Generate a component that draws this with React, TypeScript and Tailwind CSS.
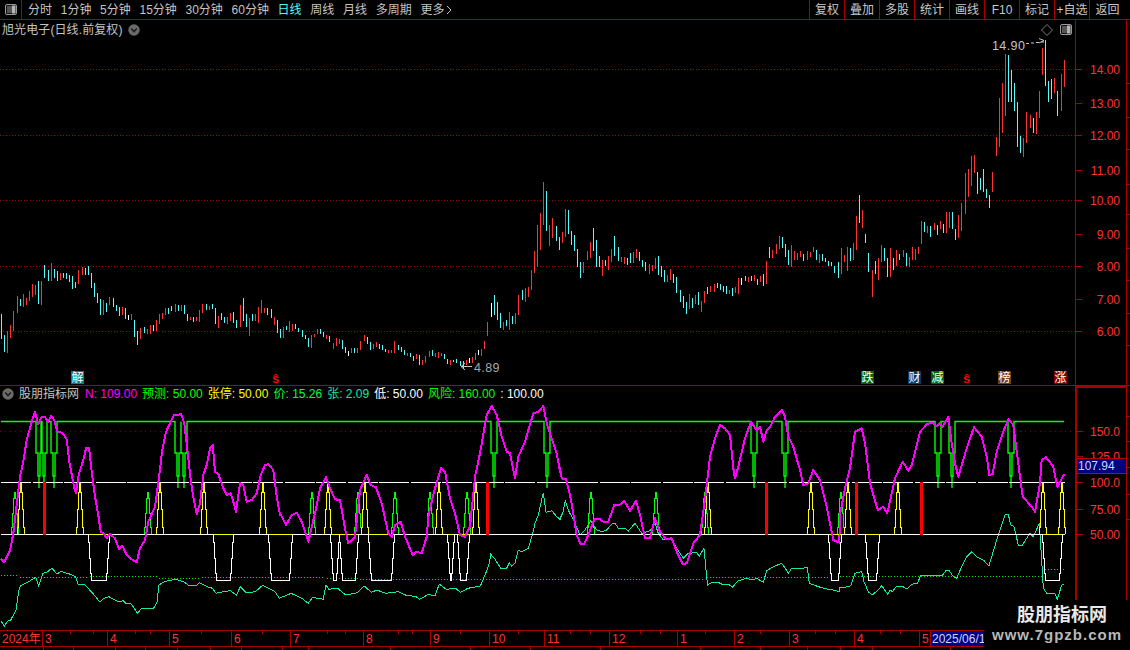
import React from "react";

const RED = "#ff3232";
const LINE = "#a80000";
const CYAN = "#54fcfc";

// candles read off the chart: x top bottom colour (crop coordinates)
const LEFT_CANDLES = "4 462 537 c,13 525 576 c,22 513 579 r,31 495 534 r,40 453 513 r,52 408 459 r,61 417 438 c,70 402 441 r,79 414 435 r,88 393 423 r,97 372 411 r,106 375 405 r,115 363 432 c,124 363 435 r,133 315 354 c,145 330 363 c,154 309 363 r,163 327 354 c,172 333 363 c,181 339 360 r,190 339 354 c,199 339 357 c,208 345 366 c,217 348 387 c,226 366 384 c,235 330 372 r,247 321 345 r,256 324 345 c,265 318 345 c,274 339 384 c,283 369 411 c,292 399 429 c,301 417 465 c,310 420 465 r,319 429 456 c,328 411 435 r,340 414 441 c,349 435 453 c,358 441 468 c,367 441 465 r,376 444 477 c,385 465 480 w,394 462 480 r,403 480 531 c,412 513 555 c,421 504 537 r,433 501 519 c,442 507 522 r,451 495 522 r,460 495 513 c,469 480 513 r,478 462 492 r,487 459 477 r,496 444 465 r,505 444 462 c,514 438 453 c,526 432 456 r,535 435 453 c,544 435 453 r,553 435 462 c,562 462 483 c,571 471 480 r,580 471 486 c,589 471 483 r,598 450 486 r,607 432 459 r,619 432 450 c,628 438 450 r,637 432 447 c,646 444 492 c,655 468 504 r,664 459 480 c,673 471 489 c,682 471 492 r,691 459 483 r,700 456 489 c,709 480 504 c,721 435 501 r,730 414 483 c,739 462 501 c,748 474 528 r,757 462 483 c,766 462 483 r,775 441 489 r,784 420 459 r,793 444 459 r,802 444 465 c,814 447 474 c,823 471 495 r,832 480 519 c,841 507 534 c,850 501 534 r,859 498 510 c,868 483 516 r,877 492 513 r,886 492 507 c,895 504 516 c,907 510 531 c,916 525 537 c,925 534 561 c,934 525 564 r,943 522 531 r,952 507 522 r,961 507 522 c,970 516 531 c,979 525 537 r,988 528 546 c,1000 549 567 r,1009 534 558 r,1018 537 552 r,1027 540 567 c,1036 561 579 c,1045 573 588 w,1054 564 579 r,1063 564 579 c,1072 564 579 r,1081 543 570 r,1093 525 543 r,1102 531 552 c,1111 546 570 c,1120 552 567 r,1129 546 561 r,1138 552 567 c,1147 555 570 c,1156 567 576 c,1165 570 579 r,1174 570 579 r,1183 543 579 r,1195 555 570 c,1204 561 576 c,1213 570 585 c,1222 579 588 r,1231 579 591 c,1240 588 603 c,1249 582 597 r,1258 585 615 c,1267 600 615 r,1276 588 609 r,1288 573 591 r,1297 570 588 c,1306 579 591 r,1315 576 594 r,1324 579 588 r,1333 582 597 c,1342 597 612 c,1351 600 615 r,1360 600 606 c,1369 597 609 c,1381 603 618 c,1390 603 627 c,1399 600 615 r,1408 594 609 w,1417 591 609 r,1426 579 600 r,1435 570 585 w,1444 567 588 r,1453 543 567 r,1462 486 528 r,1474 429 471 w,1483 405 465 c,1492 426 480 c,1501 459 504 c,1510 486 510 r,1519 480 498 c,1528 456 510 r,1537 468 492 c,1546 459 492 r,1555 405 465 r";

const RIGHT_CANDLES = "7 780 810 c,16 774 816 r,25 771 801 r,32 720 780 r,41 663 729 r,49 585 711 r,58 549 660 r,67 456 585 r,75 483 603 c,84 585 648 r,93 564 624 r,103 588 632 c,112 621 660 c,121 606 639 r,129 537 621 r,138 540 612 c,146 603 645 c,155 615 663 c,164 657 711 c,172 696 744 c,181 696 729 r,192 663 690 r,200 636 684 r,209 594 663 c,219 630 711 c,227 678 711 c,236 690 738 r,243 690 708 c,252 678 720 r,261 657 696 r,270 618 678 c,280 651 693 c,290 681 696 r,298 681 702 r,306 684 705 c,315 669 699 c,324 666 699 r,333 657 684 r,340 666 693 c,349 690 711 c,358 696 723 c,370 702 732 r,378 705 723 r,387 684 717 r,394 678 735 c,403 708 741 c,412 720 756 c,421 735 756 r,430 717 750 r,438 732 759 c,447 741 789 c,458 780 816 c,467 798 834 c,474 816 852 c,483 792 837 r,491 804 834 c,500 795 822 r,508 786 825 c,517 813 846 r,526 783 819 r,535 771 792 c,544 768 786 r,554 762 786 r,563 759 774 c,571 762 780 c,580 768 786 c,589 768 792 c,598 780 792 r,605 774 798 c,614 771 789 r,622 744 792 r,631 744 765 w,642 738 753 c,651 741 756 r,659 738 753 c,668 735 753 r,677 747 765 c,686 738 756 r,695 732 768 c,703 693 762 r,712 651 684 c,721 660 684 r,731 642 672 r,740 618 657 r,748 621 654 c,757 642 681 c,766 660 705 c,774 645 711 r,783 663 690 r,791 669 690 r,800 663 681 r,809 672 693 c,819 663 690 r,828 666 681 r,837 651 666 r,845 660 690 c,854 672 699 r,862 672 693 c,871 684 696 c,880 693 708 c,888 696 708 c,897 708 729 c,908 696 744 c,916 654 732 r,925 675 696 r,933 651 723 r,942 654 693 c,951 639 690 r,959 558 660 r,968 495 579 c,977 540 594 r,985 612 639 c,994 669 726 c,1005 720 801 r,1013 693 732 c,1022 684 750 r,1031 645 696 r,1039 654 693 c,1048 684 741 c,1056 654 741 r,1064 684 720 c,1073 660 708 r,1081 672 690 c,1093 660 681 r,1102 669 708 c,1110 681 711 r,1119 651 690 r,1127 657 690 r,1136 651 672 r,1145 573 642 r,1153 576 606 c,1162 588 609 r,1171 588 621 c,1181 579 600 r,1190 585 615 c,1199 573 597 r,1208 582 609 c,1216 546 609 r,1224 546 594 r,1233 546 597 c,1242 597 630 c,1250 555 624 r,1259 519 603 r,1270 429 552 r,1278 417 501 r,1287 378 468 r,1295 375 429 r,1304 426 492 c,1313 444 480 c,1321 417 486 c,1330 477 504 c,1338 495 534 c,1347 426 486 r,1358 321 378 r,1367 204 351 r,1375 159 309 r,1385 72 258 r,1393 75 216 c,1402 120 216 c,1410 159 243 c,1418 216 351 c,1427 318 369 c,1435 324 381 r,1444 246 339 r,1456 255 294 r,1464 264 309 c,1473 246 312 r,1481 183 264 r,1489 54 135 r,1498 30 168 c,1507 153 216 c,1515 147 207 c,1524 144 189 r,1532 183 258 c,1544 132 243 r,1552 90 171 r";

type Candle = { x: number; top: number; bottom: number; color: string };

const parseCandles = (src: string, ox: number, oy: number, sx: number): Candle[] =>
  src.split(",").map((row) => {
    const [x, t, b, c] = row.split(" ");
    return {
      x: Math.floor(ox + Number(x) / sx) + 0.5,
      top: Math.round(oy + Number(t) / 3),
      bottom: Math.round(oy + Number(b) / 3),
      color: c === "c" ? CYAN : c === "r" ? RED : "#ffffff",
    };
  });

const candles = [
  ...parseCandles(LEFT_CANDLES, 0, 160, 3),
  ...parseCandles(RIGHT_CANDLES, 520, 30, 2.851),
];

const toPoints = (src: string, ox: number, oy: number, sx: number) =>
  src
    .trim()
    .split(/\s+/)
    .map((p) => {
      const [x, y] = p.split(",").map(Number);
      return `${(ox + x / sx).toFixed(1)},${(oy + y / 3).toFixed(1)}`;
    })
    .join(" ");

const magenta = [
  toPoints("3,476 12,487 21,470 30,452 40,400 52,300 60,230 70,185 80,120 95,65 105,36 115,72 124,52 134,50 144,65 154,48 163,60 172,95 187,98 200,118 208,185 222,260 228,280 236,225 250,180 258,145 267,143 275,215 285,290 295,345 302,395 312,402 320,414 330,402 345,415 357,448 367,437 380,465 395,478 410,487 420,445 435,420 445,365 465,320 475,248 487,150 497,98 510,70 522,45 532,45 543,42 553,70 560,130 572,240 580,290 590,342 600,310 610,225 620,195 630,145 638,135 645,215 655,222 668,260 680,285 692,280 700,305 708,335 720,250 730,255 740,305 755,300 770,280 782,225 795,195 805,193 820,210 830,290 840,345", 0, 400, 3),
  toPoints("0,340 18,375 35,345 50,338 65,365 85,425 105,340 120,265 138,232 150,265 165,298 180,300 195,385 205,430 225,410 240,270 260,225 272,255 288,262 305,310 325,400 335,412 345,375 362,365 375,410 398,465 410,455 425,460 440,410 445,350 462,275 483,205 495,215 510,295 525,340 540,405 555,410 570,380 585,230 600,160 620,45 635,18 650,45 665,110 680,155 690,160 705,235 715,170 735,125 760,40 775,35 790,18 800,70 815,115 830,160 840,215", 280, 400, 3),
  toPoints("0,205 5,235 18,238 30,285 40,340 50,405 62,433 72,433 85,405 103,358 120,358 130,365 145,365 163,315 178,315 193,303 210,332 228,303 240,345 255,415 270,415 285,355 300,395 318,418 335,415 350,455 368,492 380,490 400,430 420,405 435,300 450,170 465,115 480,75 495,85 510,105 520,205 525,235 535,200 555,115 573,65 590,90 600,80 610,125 620,90 630,82 645,50 665,30 675,50 685,110 700,140 720,210 730,255 745,250 760,210 780,240 800,320 820,420 838,428", 560, 400, 3),
  toPoints("0,345 15,265 30,205 45,95 65,85 75,130 90,250 113,330 130,320 142,340 165,235 188,185 205,212 215,195 240,95 262,72 278,68 290,78 298,70 308,80 325,50 335,130 345,190 355,230 380,145 402,82 425,110 440,170 448,225 458,222 470,155 490,95 505,58 520,75 535,190 548,290 575,320 585,335 600,250 605,180 618,172 640,200 652,260 673,222", 840, 400, 3),
].join(" ");

const teal = [
  toPoints("3,183 12,198 22,183 30,180 45,150 52,95 57,78 80,65 100,52 108,78 120,40 132,36 145,25 160,42 170,34 195,42 212,50 218,72 235,72 260,100 280,127 290,115 305,110 330,125 345,122 352,130 368,132 385,160 395,147 430,145 440,125 445,75 460,65 490,58 515,65 530,78 552,75 558,68 580,80 595,85 605,100 625,95 645,92 662,105 673,80 690,98 715,95 735,76 770,95 782,115 815,100 845,115 863,130 875,112 905,118 913,75 920,88 945,85 968,105 1000,98 1020,78 1040,97 1055,90 1080,100 1115,95 1135,105 1165,110 1175,118 1200,103 1218,108 1230,72 1250,88 1275,85 1290,97 1310,85 1345,78 1360,40 1370,10", 0, 560, 2.8),
  toPoints("632,463 645,478 662,505 680,505 688,488 695,498 705,490 715,450 725,455 745,445 757,405 765,370 775,345 790,278 798,337 815,332 830,350 840,358", 280, 400, 3),
  toPoints("0,355 8,340 16,302 25,330 45,370 60,405 75,390 92,362 110,390 125,395 140,390 155,372 165,370 175,385 195,385 205,393 225,370 235,385 245,400 270,392 285,370 295,400 310,420 320,415 335,418 350,445 370,475 385,460 410,458 418,468 432,445 437,500 440,535 443,555 455,547 475,547 490,555 505,552 517,562 535,542 560,535 575,540 590,535 610,547 620,512 640,500 665,490 675,503 685,520 695,505 720,505 742,503 748,550 775,560 800,567 820,570 838,575", 560, 400, 3),
  toPoints("0,562 15,562 32,557 45,520 65,515 72,545 85,575 97,585 115,570 125,557 143,583 150,570 157,575 170,558 185,558 200,567 215,553 232,550 243,525 265,528 290,527 305,528 318,512 328,512 340,530 350,535 365,500 380,470 395,455 410,470 430,480 447,497 470,420 495,345 505,343 512,375 522,380 535,435 547,435 570,400 580,410 598,370 605,480 610,565 620,580 645,582 652,598 665,555 672,552", 840, 400, 3),
].join(" ");

const dottedSegments = [
  [1, 17, 575.5], [20, 87, 577.5], [90, 157, 576.5], [159, 200, 578.5], [202, 325, 577.5],
  [327, 360, 578.5], [360, 703, 579.5], [707, 830, 577.5], [840, 1042, 576.5], [1042, 1064, 569.5],
];

const yellowPeaks = [20, 79, 159, 203, 262, 327, 364, 438, 475, 707, 810, 847, 897, 1042, 1061];
const greenPeaks = [14, 147, 311, 357, 394, 429, 466, 590, 655, 704, 840];
const greenDrops = [39, 44, 54, 178, 184, 494, 547, 754, 785, 938, 952, 1011];
const whiteDrops = [
  [88, 109], [213, 233], [268, 292], [330, 339], [339, 358], [368, 394], [447, 454], [457, 469],
  [828, 841], [865, 879], [1042, 1062],
];
const redBars = [44, 487, 766, 856, 921];

const pyramid = (c: number, y1: number, y2: number, y3: number) =>
  `M${c - 3} 534V527H${c - 2}V${y1}H${c - 1}V${y2}H${c}V${y3}H${c + 1}V${y2}H${c + 2}V${y1}H${c + 3}V527H${c + 4}V534`;

const dropPath = (l: number, r: number) =>
  `M${l} 534V542H${l + 1}V558H${l + 2}V573H${l + 3}V580H${r - 3}V573H${r - 2}V558H${r - 1}V542H${r}V534`;

const greenTop = () => {
  let d = "M1 421.5";
  greenDrops.forEach((c) => {
    d += `H${c - 3}V453H${c - 1}V476H${c}V488V476H${c + 1}V453H${c + 3}V421.5`;
  });
  return d + "H1064";
};

const leftTabs = ["分时", "1分钟", "5分钟", "15分钟", "30分钟", "60分钟", "日线", "周线", "月线", "多周期"];
const rightTabs = ["复权", "叠加", "多股", "统计", "画线", "F10", "标记", "+自选"];

const months = [
  { label: "2024年", cls: "w-[43px]" },
  { label: "3", cls: "w-[65px]" },
  { label: "4", cls: "w-[62px]" },
  { label: "5", cls: "w-[62px]" },
  { label: "6", cls: "w-[59px]" },
  { label: "7", cls: "w-[73px]" },
  { label: "8", cls: "w-[67px]" },
  { label: "9", cls: "w-[59px]" },
  { label: "10", cls: "w-[55px]" },
  { label: "11", cls: "w-[65px]" },
  { label: "12", cls: "w-[68px]" },
  { label: "1", cls: "w-[57px]" },
  { label: "2", cls: "w-[55px]" },
  { label: "3", cls: "w-[65px]" },
  { label: "4", cls: "w-[65px]" },
  { label: "5", cls: "w-[11px]" },
];

const minorTicks = [70, 93, 135, 150, 201, 262, 327, 345, 398, 412, 460, 518, 570, 590, 640, 660, 705, 760, 815, 835, 880, 900];
const bottomSeps = [43, 73, 115, 145, 177, 210, 241, 282, 308, 390, 470, 530, 600, 700, 760, 807, 840, 872, 950];

const upperAxis = [[69, "14.00"], [103, "13.00"], [135, "12.00"], [170, "11.00"], [200, "10.00"], [234, "9.00"], [266, "8.00"], [299, "7.00"], [331, "6.00"]] as const;
const lowerAxis = [[431, "150.0"], [456, "125.0"], [482, "100.0"], [509, "75.00"], [534, "50.00"]] as const;

const badges = [
  { text: "解", cls: "left-[71px] bg-[#008080]" },
  { text: "跌", cls: "left-[861px] bg-[#006400]" },
  { text: "财", cls: "left-[908px] bg-[#003a6e]" },
  { text: "减", cls: "left-[931px] bg-[#006400]" },
  { text: "榜", cls: "left-[998px] bg-[#7a3c10]" },
  { text: "涨", cls: "left-[1054px] bg-[#800000]" },
];

const legend = [
  { text: "N: 109.00", cls: "text-[#ff00ff]" },
  { text: "预测: 50.00", cls: "text-[#00ff00]" },
  { text: "张停: 50.00", cls: "text-[#ffff00]" },
  { text: "价: 15.26", cls: "text-[#00ff40]" },
  { text: "张: 2.09", cls: "text-[#18e8a0]" },
  { text: "低: 50.00", cls: "text-white" },
  { text: "风险: 160.00", cls: "text-[#00ff00]" },
  { text: ": 100.00", cls: "text-white" },
];

const RoundChevron = () => (
  <svg width="12" height="12" viewBox="0 0 12 12" className="shrink-0">
    <circle cx="6" cy="6" r="5.7" fill="#6a6a6a" />
    <path d="M3.2 4.6 6 7.6 8.8 4.6" fill="none" stroke="#1c1c1c" strokeWidth="1.4" />
  </svg>
);

const PanelIcon = () => (
  <svg width="12" height="11" viewBox="0 0 12 11" className="shrink-0">
    <rect x="0.5" y="0.5" width="11" height="10" rx="1.5" fill="#111" stroke="#9a9a9a" />
    <rect x="7" y="1.5" width="3.5" height="8" fill="#b5b5b5" />
    <rect x="2" y="2" width="5" height="7" fill="#555" />
  </svg>
);

function UpperChart() {
  return (
    <svg className="absolute left-0 top-0" width="1075" height="365" viewBox="0 20 1075 365" shapeRendering="crispEdges">
      <defs>
        <pattern id="grid-dots" x="0" y="0" width="3" height="1" patternUnits="userSpaceOnUse">
          <rect width="1" height="1" fill="#9c0000" />
        </pattern>
      </defs>
      {[69, 135, 200, 266, 331].map((y) => (
        <rect key={y} x="0" y={y} width="1075" height="1" fill="url(#grid-dots)" />
      ))}
      {candles.map((k, i) => (
        <line key={i} x1={k.x} x2={k.x} y1={k.top} y2={k.bottom} stroke={k.color} />
      ))}
      <g shapeRendering="auto" stroke="#c4c4c4" fill="none">
        <path d="M1026 43.5h3m2-.5h3m2-.5h3m2-.5h3" />
        <path d="M1039 38.5l5 2-5 2.5" />
        <path d="M472 366.5h-11M465 363l-4 3.5 4 3.5" />
        <path d="M1047 24.5l5.5 5.5-5.5 5.5-5.5-5.5z" stroke="#7c7c7c" />
      </g>
      <text x="992" y="50" fill="#c4c4c4" fontSize="12.5" shapeRendering="auto" letterSpacing="0.4">14.90</text>
      <text x="474" y="372" fill="#a8a8a8" fontSize="12.5" shapeRendering="auto" letterSpacing="0.4">4.89</text>
    </svg>
  );
}

function LowerChart() {
  return (
    <svg className="absolute left-0 top-0" width="1075" height="244" viewBox="0 386 1075 244" shapeRendering="crispEdges" fill="none">
      <line x1="0" x2="1075" y1="431.5" y2="431.5" stroke="#7c0000" strokeDasharray="1 4" shapeRendering="auto" />
      {dottedSegments.map(([a, b, y]) => (
        <line key={a} x1={a} x2={b} y1={y} y2={y} stroke="#00e000" strokeDasharray="1 2" shapeRendering="auto" />
      ))}
      <polyline points={teal} stroke="#18e8a0" />
      <path d={greenTop()} stroke="#00ff00" strokeWidth="1.4" shapeRendering="auto" />
      {greenPeaks.map((c) => (
        <path key={c} d={pyramid(c, 513, 498, 492)} stroke="#00ff00" />
      ))}
      {yellowPeaks.map((c) => (
        <path key={c} d={pyramid(c, 509, 492, 483)} stroke="#ffff00" />
      ))}
      <line x1="1" x2="1065" y1="482.5" y2="482.5" stroke="#ffffff" strokeDasharray="30 1.5" />
      <line x1="1" x2="1065" y1="534.5" y2="534.5" stroke="#ffffff" />
      {whiteDrops.map(([l, r]) => (
        <g key={l}>
          <line x1={l} x2={r} y1="534.5" y2="534.5" stroke="#ffff00" />
          <path d={dropPath(l, r)} stroke="#ffffff" />
        </g>
      ))}
      {redBars.map((x) => (
        <rect key={x} x={x - 1} y="482" width="3" height="53" fill="#ff0000" />
      ))}
      <polyline points={magenta} stroke="#ff00ff" strokeWidth="2" strokeLinejoin="round" />
    </svg>
  );
}

export default function App() {
  return (
    <div className="relative flex h-[650px] w-[1130px] flex-col overflow-hidden bg-black text-[12px] leading-none text-[#c4c4c4] [font-family:'Liberation_Sans','Noto_Sans_CJK_SC',sans-serif]">
      {/* toolbar */}
      <div className="flex h-[20px] shrink-0 items-center border-b border-[#a80000]">
        <div className="flex h-full w-[22px] shrink-0 items-center justify-center border-r border-[#a80000]">
          <PanelIcon />
        </div>
        <div className="flex flex-1 items-center gap-[8.7px] pl-[6px]">
          {leftTabs.map((t) => (
            <span key={t} className={t === "日线" ? "text-[#54fcfc]" : ""}>{t}</span>
          ))}
          <span className="flex items-center gap-[2px]">
            更多
            <svg width="6" height="10" viewBox="0 0 6 10" fill="none" stroke="#c4c4c4">
              <path d="M1 1l4 4-4 4" />
            </svg>
          </span>
        </div>
        <div className="flex h-full shrink-0 pr-[5px]">
          {rightTabs.map((t) => (
            <span key={t} className="flex h-full w-[35px] items-center justify-center whitespace-nowrap border-l border-[#a80000] text-[#c8c8c8]">{t}</span>
          ))}
          <span className="flex h-full w-[36px] items-center justify-center border-l border-[#a80000] text-[#c8c8c8]">返回</span>
        </div>
      </div>

      {/* price panel */}
      <div className="flex h-[366px] shrink-0 border-b border-[#a80000]">
        <div className="relative w-[1075px] shrink-0">
          <UpperChart />
          <div className="relative flex h-[19px] items-center gap-[5px] pl-[2px]">
            <span className="tracking-[0.1px]">旭光电子(日线.前复权)</span>
            <RoundChevron />
          </div>
          <div className="absolute right-[3px] top-[4px]">
            <PanelIcon />
          </div>
          {badges.map((b) => (
            <span key={b.text} className={`absolute top-[351px] flex h-[13px] w-[13px] items-center justify-center text-[12px] text-white ${b.cls}`}>{b.text}</span>
          ))}
          <span className="absolute left-[272px] top-[352px] text-[13px] font-bold text-[#ff0000]">ŝ</span>
          <span className="absolute left-[963px] top-[352px] text-[13px] font-bold text-[#ff0000]">ŝ</span>
        </div>
        <svg width="55" height="365" viewBox="1075 20 55 365" className="shrink-0" shapeRendering="crispEdges">
          <line x1="1075.5" x2="1075.5" y1="20" y2="385" stroke={LINE} />
          <line x1="1126.5" x2="1126.5" y1="20" y2="385" stroke={LINE} />
          {upperAxis.map(([y, label]) => (
            <g key={y}>
              <line x1="1076" x2="1082" y1={y + 0.5} y2={y + 0.5} stroke={LINE} />
              <line x1="1127" x2="1130" y1={y + 14.5} y2={y + 14.5} stroke={LINE} />
              <text x="1120" y={y + 5} textAnchor="end" fill={RED} fontSize="12" shapeRendering="auto">{label}</text>
            </g>
          ))}
        </svg>
      </div>

      {/* indicator panel */}
      <div className="flex h-[244px] shrink-0">
        <div className="relative w-[1075px] shrink-0">
          <LowerChart />
          <div className="relative flex h-[16px] items-center gap-[5px] whitespace-nowrap pl-[2px]">
            <RoundChevron />
            <span className="mr-[1px]">股朋指标网</span>
            {legend.map((l) => (
              <span key={l.text} className={l.cls}>{l.text}</span>
            ))}
          </div>
        </div>
        <div className="relative w-[55px] shrink-0">
          <svg width="55" height="244" viewBox="1075 386 55 244" shapeRendering="crispEdges">
            <rect x="1075" y="386" width="52" height="2" fill={LINE} />
            <rect x="1075" y="386" width="2" height="214" fill={LINE} />
            <line x1="1126.5" x2="1126.5" y1="386" y2="600" stroke={LINE} />
            {lowerAxis.map(([y, label]) => (
              <g key={y}>
                <line x1="1077" x2="1083" y1={y + 0.5} y2={y + 0.5} stroke={LINE} />
                <line x1="1127" x2="1130" y1={y - 14.5} y2={y - 14.5} stroke={LINE} />
                <text x="1120" y={y + 5} textAnchor="end" fill={RED} fontSize="12" shapeRendering="auto">{label}</text>
              </g>
            ))}
          </svg>
          <div className="absolute left-[1px] top-[72px] flex h-[16px] w-[51px] items-center border border-[#c00000] bg-[#000080] pl-[1px] text-[12px] text-[#c8d8ff]">107.94</div>
        </div>
      </div>

      {/* time axis */}
      <div className="relative flex h-[17px] shrink-0 border-y border-[#a80000] text-[12px] text-[#ff3232]">
        {months.map((m, i) => (
          <span key={i} className={`flex h-full shrink-0 items-center border-r border-[#a80000] pl-[2px] ${m.cls}`}>{m.label}</span>
        ))}
        <span className="flex h-full w-[53px] shrink-0 items-center overflow-hidden whitespace-nowrap bg-[#000080] pl-[1px] text-[#c8d8ff]">2025/06/1</span>
        <svg className="absolute left-0 top-0" width="984" height="4" shapeRendering="crispEdges">
          {minorTicks.map((x) => (
            <line key={x} x1={x + 0.5} x2={x + 0.5} y1="0" y2="3" stroke={LINE} />
          ))}
        </svg>
      </div>

      {/* clipped status row */}
      <div className="relative h-[3px] shrink-0 overflow-hidden">
        <svg className="absolute left-0 top-0" width="984" height="3" shapeRendering="crispEdges">
          {bottomSeps.map((x) => (
            <line key={x} x1={x + 0.5} x2={x + 0.5} y1="0" y2="3" stroke={LINE} />
          ))}
        </svg>
      </div>

      {/* watermark */}
      <div className="absolute bottom-0 right-0 flex h-[50px] w-[146px] flex-col items-center bg-black pt-[5px]">
        <span className="pl-[10px] text-[18px] font-bold leading-[20px] text-[#e8e8e8]">股朋指标网</span>
        <span className="mt-[1px] text-[15px] font-bold leading-[18px] tracking-[1px] text-[#b8b8b8]">www.7gpzb.com</span>
      </div>
    </div>
  );
}
